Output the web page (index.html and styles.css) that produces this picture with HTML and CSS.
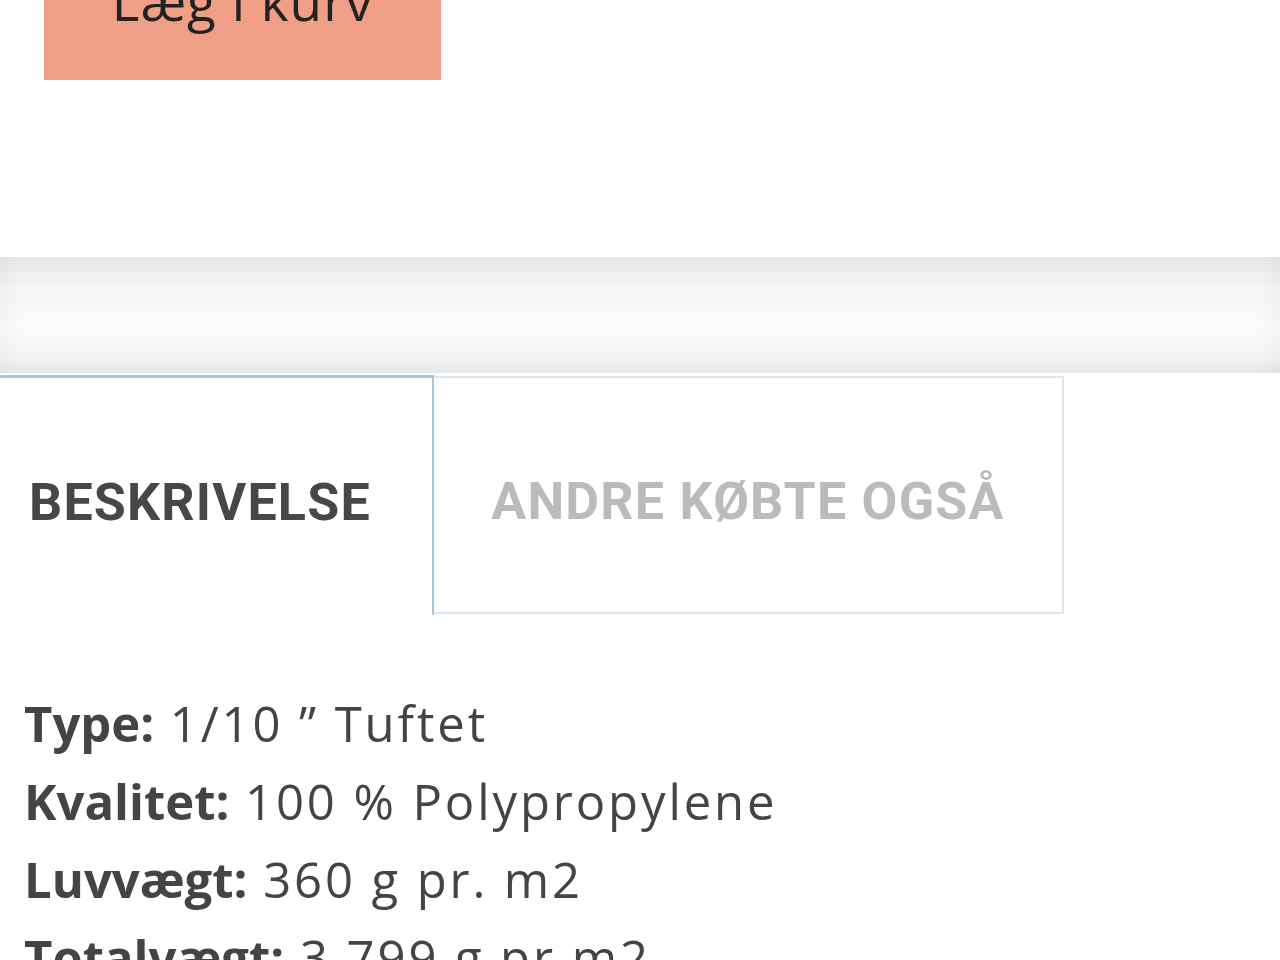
FILE: index.html
```html
<!DOCTYPE html>
<html lang="da">
<head>
    <meta charset="UTF-8">
    <meta name="viewport" content="width=device-width, initial-scale=1.0">
    <title>Tæppe - Beskrivelse</title>
    <link rel="stylesheet" href="styles.css">
</head>
<body>
    <div class="buy">
        <button class="buy-btn" type="button">Læg i kurv</button>
    </div>

    <div class="band"></div>

    <!-- Faner -->
    <div class="tabs">
        <div class="tab active">BESKRIVELSE</div>
        <div class="tab">ANDRE KØBTE OGSÅ</div>
    </div>

    <div class="desc">
        <p><b>Type:</b> 1/10 ” Tuftet</p>
        <p><b>Kvalitet:</b> 100 % Polypropylene</p>
        <p><b>Luvvægt:</b> 360 g pr. m2</p>
        <p><b>Totalvægt:</b> 3.799 g pr.m2</p>
    </div>
</body>
</html>
```

FILE: styles.css
```css
body {
    margin: 0;
    padding: 0;
    background: #fff;
    font-family: "Open Sans", "Noto Sans", sans-serif;
    color: #444;
    overflow: hidden;
}
.buy {
    padding: 0 44px;
    margin-top: -80px;
}
.buy-btn {
    width: 397px;
    height: 160px;
    border: none;
    background-color: #f09f87;
    color: #222;
    font-family: "Open Sans", sans-serif;
    font-size: 53px;
    letter-spacing: 1px;
    padding: 0;
}
.band {
    margin-top: 177px;
    height: 116px;
    background: linear-gradient(#e8e8e8, #f4f4f4 25%, #fbfbfb 60%, #f3f3f3 88%, #e8e8e8);
    box-shadow: inset 30px 0 30px -30px rgba(0, 0, 0, 0.06), inset -30px 0 30px -30px rgba(0, 0, 0, 0.06);
}
.tabs {
    display: flex;
    align-items: flex-start;
    margin-top: 2px;
}
.tab {
    box-sizing: border-box;
    display: flex;
    align-items: center;
    font-family: Roboto, sans-serif;
    font-weight: bold;
    font-size: 52px;
    letter-spacing: 1.2px;
    height: 240px;
    padding-top: 12px;
}
.tab.active {
    width: 434px;
    padding-left: 29px;
    color: #474747;
    border-top: 3px solid #a9c4dc;
    border-right: 2px solid #a9c4dc;
}
.tab:not(.active) {
    width: 630px;
    height: 238px;
    margin-top: 1px;
    justify-content: center;
    color: #bbb;
    border: 2px solid #dde6ee;
    border-left: none;
}
.desc {
    padding: 69px 24px 0;
    font-size: 49px;
}
.desc p {
    margin: 0;
    line-height: 78px;
    letter-spacing: 2.9px;
}
.desc b {
    color: #444;
    letter-spacing: 0;
}
```
